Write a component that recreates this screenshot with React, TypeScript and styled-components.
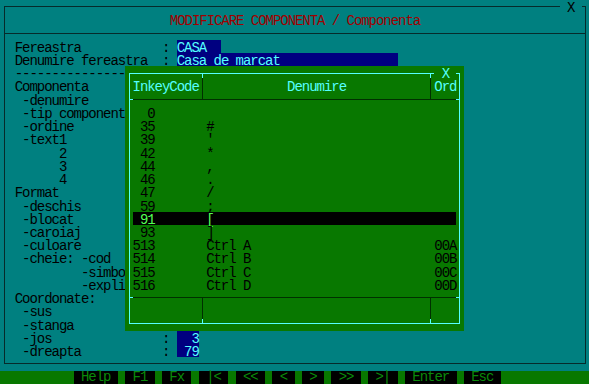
import React from 'react';
import styled, { createGlobalStyle } from 'styled-components';

// text-mode grid: 80 columns x 29 rows
const CW = 589 / 80;
const ROW = 384 / 29;
const FONT = 14;
const cols = (n: number) => `${n * CW}px`;

const colors = {
	teal: '#008080',
	green: '#087800',
	navy: '#000080',
	cyan: '#55ffff',
	brightGreen: '#55ff55',
	red: '#a00000',
	frame: '#062b2b',
	line: '#003000',
	keyText: '#0a8a0a',
};

// taller line-height drops the baseline a little, like the DOS font
const GlobalStyle = createGlobalStyle`
	html, body {
		margin: 0;
		padding: 0;
		background: ${colors.teal};
	}
	body {
		font-family: 'Liberation Mono', 'DejaVu Sans Mono', monospace;
		font-size: ${FONT}px;
		letter-spacing: ${CW - FONT * 0.6001}px;
		line-height: ${ROW + 3}px;
		color: #000;
	}
`;

const Screen = styled.div`
	position: relative;
	width: 589px;
	height: 384px;
	overflow: hidden;
	display: flex;
	flex-direction: column;
	background: ${colors.teal};
`;

const Frame = styled.div`
	position: relative;
	box-sizing: border-box;
	height: 358px;
	margin: 6px 3px 0 4px;
	padding-top: ${ROW - 7}px;
	border: 1px solid ${colors.frame};
`;

const CloseMark = styled.div`
	position: absolute;
	top: -7px;
	right: ${585 - 79 * CW}px;
	width: ${cols(3)};
	height: ${ROW}px;
	text-align: center;
	background: ${colors.teal};
	color: #000;
`;

const Title = styled.div`
	height: ${ROW}px;
	text-align: center;
	color: ${colors.red};
	white-space: pre;
`;

const Divider = styled.div`
	position: relative;
	height: ${ROW}px;

	&::after {
		content: '';
		position: absolute;
		left: 0;
		right: 0;
		top: 50%;
		height: 1px;
		background: ${colors.frame};
	}
`;

const Rows = styled.div`
	display: flex;
	flex-direction: column;
	padding-left: ${CW - 5}px;
`;

const Row = styled.div`
	height: ${ROW}px;
	white-space: pre;
`;

const Field = styled.span`
	display: inline-block;
	vertical-align: top;
	height: ${ROW}px;
	background: ${colors.navy};
	color: ${colors.cyan};
`;

const Popup = styled.div`
	position: absolute;
	left: ${cols(17)};
	top: ${5 * ROW}px;
	width: ${cols(46)};
	height: ${20 * ROW}px;
	background: ${colors.green};
	display: grid;
	grid-template-columns: ${cols(1)} ${cols(9)} ${cols(1)} ${cols(30)} ${cols(1)} ${cols(3)} ${cols(1)};
	grid-template-rows: repeat(20, ${ROW}px);
	white-space: pre;

	&::before {
		content: '';
		position: absolute;
		inset: ${ROW / 2}px ${CW / 2}px;
		border: 1px solid ${colors.cyan};
		pointer-events: none;
	}
`;

const PopupClose = styled.div`
	position: relative;
	z-index: 1;
	grid-column: 6;
	grid-row: 1;
	text-align: center;
	background: ${colors.green};
	color: ${colors.cyan};
`;

const HeadCell = styled.div<{ col: number; align?: string }>`
	grid-row: 2;
	grid-column: ${({ col }) => col};
	text-align: ${({ align }) => align || 'left'};
	color: ${colors.cyan};
`;

const VSep = styled.div<{ col: number; rows: string; cap: 'top' | 'bottom' }>`
	grid-column: ${({ col }) => col};
	grid-row: ${({ rows }) => rows};
	justify-self: center;
	width: 1px;
	margin: ${ROW / 2}px 0;
	background: ${({ cap }) =>
		cap === 'top'
			? `linear-gradient(to bottom, ${colors.cyan} 0 5px, ${colors.line} 5px 100%)`
			: `linear-gradient(to top, ${colors.cyan} 0 5px, ${colors.line} 5px 100%)`};
`;

const HLine = styled.div<{ row: number }>`
	grid-column: 1 / -1;
	grid-row: ${({ row }) => row};
	align-self: center;
	height: 1px;
	margin: 0 ${CW / 2}px;
	background: linear-gradient(
		to right,
		${colors.cyan} 0 4px,
		${colors.line} 4px calc(100% - 4px),
		${colors.cyan} calc(100% - 4px)
	);
`;

const Body = styled.div`
	grid-column: 2 / 7;
	grid-row: 4 / 18;
	display: flex;
	flex-direction: column;
`;

const DataRow = styled.div<{ active?: boolean }>`
	height: ${ROW}px;
	display: grid;
	grid-template-columns: ${cols(9)} ${cols(1)} ${cols(30)} ${cols(1)} ${cols(3)};
	background: ${({ active }) => (active ? '#000' : 'transparent')};
	color: ${({ active }) => (active ? colors.brightGreen : '#000')};
`;

const Cell = styled.span<{ col: number }>`
	grid-column: ${({ col }) => col};
	height: ${ROW}px;
`;

const Bar = styled.div`
	margin-top: auto;
	height: ${ROW}px;
	line-height: ${ROW}px;
	display: flex;
	gap: ${cols(1)};
	padding-left: ${cols(10)};
	background: ${colors.green};
`;

const Key = styled.span`
	background: #000;
	color: ${colors.keyText};
	white-space: pre;
`;

type FormRow = { text: string; field?: string };

const formRows: FormRow[] = [
	{ text: ' Fereastra'.padEnd(21) + ': ', field: 'CASA  ' },
	{ text: ' Denumire fereastra'.padEnd(21) + ': ', field: 'Casa de marcat'.padEnd(30) },
	{ text: ' ' + '-'.repeat(15) },
	{ text: ' Componenta' },
	{ text: '  -denumire' },
	{ text: '  -tip component' },
	{ text: '  -ordine' },
	{ text: '  -text1' },
	{ text: '       2' },
	{ text: '       3' },
	{ text: '       4' },
	{ text: ' Format' },
	{ text: '  -deschis' },
	{ text: '  -blocat' },
	{ text: '  -caroiaj' },
	{ text: '  -culoare' },
	{ text: '  -cheie: -cod' },
	{ text: '          -simbo' },
	{ text: '          -expli' },
	{ text: ' Coordonate:' },
	{ text: '  -sus' },
	{ text: '  -stanga' },
	{ text: '  -jos'.padEnd(21) + ': ', field: '  3' },
	{ text: '  -dreapta'.padEnd(21) + ': ', field: ' 79' },
];

const keys = [
	{ code: 0, name: '' },
	{ code: 35, name: '#' },
	{ code: 39, name: "'" },
	{ code: 42, name: '*' },
	{ code: 44, name: ',' },
	{ code: 46, name: '.' },
	{ code: 47, name: '/' },
	{ code: 59, name: ';' },
	{ code: 91, name: '[', active: true },
	{ code: 93, name: ']' },
	{ code: 513, name: 'Ctrl A', ord: '00A' },
	{ code: 514, name: 'Ctrl B', ord: '00B' },
	{ code: 515, name: 'Ctrl C', ord: '00C' },
	{ code: 516, name: 'Ctrl D', ord: '00D' },
];

const buttons = ['Help', 'F1', 'Fx', '|<', '<<', '<', '>', '>>', '>|', 'Enter', 'Esc'];

const App = () => (
	<>
		<GlobalStyle />
		<Screen>
			<Frame>
				<CloseMark>X</CloseMark>
				<Title>MODIFICARE COMPONENTA / Componenta</Title>
				<Divider />
				<Rows>
					{formRows.map((r, i) => (
						<Row key={i}>
							{r.text}
							{r.field && <Field>{r.field}</Field>}
						</Row>
					))}
				</Rows>
			</Frame>

			<Popup>
				<PopupClose>X</PopupClose>
				<VSep col={3} rows='1 / 4' cap='top' />
				<VSep col={5} rows='1 / 4' cap='top' />
				<HeadCell col={2}>InkeyCode</HeadCell>
				<HeadCell col={4} align='center'>Denumire</HeadCell>
				<HeadCell col={6}>Ord</HeadCell>
				<HLine row={3} />
				<Body>
					{keys.map((k) => (
						<DataRow key={k.code} active={k.active}>
							<Cell col={1}>{String(k.code).padStart(3)}</Cell>
							<Cell col={3}>{k.name}</Cell>
							<Cell col={5}>{k.ord || ''}</Cell>
						</DataRow>
					))}
				</Body>
				<HLine row={18} />
				<VSep col={3} rows='18 / 21' cap='bottom' />
				<VSep col={5} rows='18 / 21' cap='bottom' />
			</Popup>

			<Bar>
				{buttons.map((b) => (
					<Key key={b}>{` ${b} `}</Key>
				))}
			</Bar>
		</Screen>
	</>
);

export default App;
